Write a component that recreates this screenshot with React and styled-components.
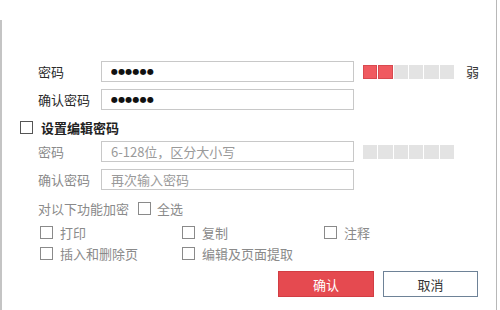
import styled, { createGlobalStyle } from 'styled-components';

const GlobalStyle = createGlobalStyle`
  html, body {
    margin: 0;
    padding: 0;
    background: #fff;
  }
  body {
    font-family: "Noto Sans CJK SC", "Noto Sans", sans-serif;
    font-size: 13px;
    color: #222;
  }
`;

const Page = styled.div`
  width: 496px;
  height: 310px;
  border-right: 1px solid #b8b8b8;
  overflow: hidden;
`;

const Panel = styled.div`
  margin-top: 20px;
  height: 290px;
  border-left: 2px solid #c4c4c4;
  box-sizing: border-box;
  padding: 41px 0 0 36px;
  display: flex;
  flex-direction: column;
`;

const Row = styled.div`
  display: flex;
  align-items: center;
  height: 21px;
  margin-top: ${p => p.$top || 0}px;
`;

const Label = styled.span`
  width: 63px;
  flex: none;
  line-height: 21px;
  color: ${p => (p.$disabled ? '#8a8a8a' : '#2a2a2a')};
  white-space: nowrap;
`;

const Field = styled.input`
  width: 253px;
  height: 21px;
  box-sizing: border-box;
  border: 1px solid #c8c8c8;
  background: #fff;
  padding: 0 9px;
  margin: 0;
  outline: none;
  font-family: "Noto Sans CJK SC", sans-serif;
  font-size: 13px;
  color: #222;

  &.dots {
    font-family: "DejaVu Sans", sans-serif;
    font-size: 8px;
    letter-spacing: 0.2px;
    color: #111;
  }

  &::placeholder {
    color: #9a9a9a;
  }
`;

const Strength = styled.div`
  display: flex;
  gap: 1px;
  width: 91px;
  height: 14px;
  margin-left: 9px;
`;

const Segment = styled.div`
  flex: 1;
  box-sizing: border-box;
  background: ${p => (p.$on ? '#f05a60' : '#e3e3e3')};
  border: 1px solid ${p => (p.$on ? '#d84a50' : '#e3e3e3')};
`;

const Level = styled.span`
  margin-left: 12px;
  color: #333;
`;

const CheckBox = styled.span`
  display: inline-block;
  width: 11px;
  height: 11px;
  flex: none;
  border: 1px solid ${p => (p.$dark ? '#555' : '#8a8a8a')};
  background: #fff;
`;

const Section = styled.label`
  display: flex;
  align-items: center;
  gap: 8px;
  margin: 10px 0 0 -18px;
  height: 14px;
  font-weight: 700;
  color: #222;
`;

const Encrypt = styled.div`
  display: flex;
  align-items: center;
  margin-top: 11px;
  height: 14px;
  color: #8a8a8a;
`;

const Options = styled.div`
  display: grid;
  grid-template-columns: repeat(3, 142px);
  grid-auto-rows: 14px;
  row-gap: 7px;
  margin: 10px 0 0 2px;
`;

const Option = styled.label`
  display: flex;
  align-items: center;
  gap: 7px;
  color: #8a8a8a;
  white-space: nowrap;
`;

const Actions = styled.div`
  display: flex;
  justify-content: flex-end;
  gap: 9px;
  margin: 11px 18px 0 0;
`;

const Button = styled.button`
  width: ${p => (p.$primary ? 96 : 95)}px;
  height: 26px;
  box-sizing: border-box;
  border: 1px solid ${p => (p.$primary ? '#d23d43' : '#6e8297')};
  background: ${p => (p.$primary ? '#e54a50' : '#fff')};
  color: ${p => (p.$primary ? '#fff' : '#333')};
  font-family: "Noto Sans CJK SC", sans-serif;
  font-size: 13px;
  padding: 0;
  cursor: pointer;
`;

const Bar = ({ on }) => (
  <Strength>
    {[0, 1, 2, 3, 4, 5].map(i => (
      <Segment key={i} $on={i < on} />
    ))}
  </Strength>
);

export default function App() {
  return (
    <Page>
      <GlobalStyle />
      <Panel>
        <Row>
          <Label>密码</Label>
          <Field className="dots" readOnly value="●●●●●●" />
          <Bar on={2} />
          <Level>弱</Level>
        </Row>
        <Row $top={7}>
          <Label>确认密码</Label>
          <Field className="dots" readOnly value="●●●●●●" />
        </Row>

        <Section>
          <CheckBox $dark />
          设置编辑密码
        </Section>

        <Row $top={7}>
          <Label $disabled>密码</Label>
          <Field readOnly placeholder="6-128位，区分大小写" />
          <Bar on={0} />
        </Row>
        <Row $top={7}>
          <Label $disabled>确认密码</Label>
          <Field readOnly placeholder="再次输入密码" />
        </Row>

        <Encrypt>
          对以下功能加密
          <CheckBox style={{ margin: '0 6px 0 9px' }} />
          全选
        </Encrypt>

        <Options>
          <Option><CheckBox />打印</Option>
          <Option><CheckBox />复制</Option>
          <Option><CheckBox />注释</Option>
          <Option><CheckBox />插入和删除页</Option>
          <Option><CheckBox />编辑及页面提取</Option>
        </Options>

        <Actions>
          <Button $primary>确认</Button>
          <Button>取消</Button>
        </Actions>
      </Panel>
    </Page>
  );
}
